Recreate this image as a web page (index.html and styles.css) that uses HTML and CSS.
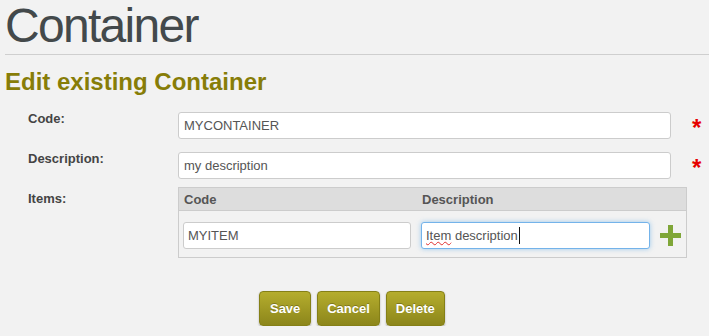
FILE: index.html
```html
<!DOCTYPE html>
<html lang="en">
<head>
  <meta charset="UTF-8">
  <meta name="viewport" content="width=device-width, initial-scale=1.0">
  <title>Container</title>

  <link rel="stylesheet" href="styles.css">

</head>
<body>
  <div class="page">
    <h1 class="title">Container</h1>
    <h2 class="subtitle">Edit existing Container</h2>

    <form class="edit-form">
      <div class="form-row row-code">
        <label class="form-label">Code:</label>
        <input type="text" class="field" value="MYCONTAINER">
        <span class="required">*</span>
      </div>

      <div class="form-row row-desc">
        <label class="form-label">Description:</label>
        <input type="text" class="field" value="my description">
        <span class="required">*</span>
      </div>

      <div class="form-row">
        <label class="form-label items-label">Items:</label>
        <div class="items">
          <div class="items-head">
            <div class="cell">Code</div>
            <div class="cell">Description</div>
            <div class="cell"></div>
          </div>
          <div class="items-row">
            <div class="cell"><input type="text" class="item-field" value="MYITEM"></div>
            <div class="cell">
              <div class="item-field focused"><span class="misspelled">Item</span> description<span class="caret"></span></div>
            </div>
            <div class="cell add-cell">
              <svg class="add-icon" width="21" height="21" viewBox="0 0 21 21">
                <rect x="8" y="0" width="5" height="21" fill="#7fa638"/>
                <rect x="0" y="8" width="21" height="5" fill="#7fa638"/>
              </svg>
            </div>
          </div>
        </div>
      </div>

      <div class="actions">
        <button type="button" class="btn">Save</button>
        <button type="button" class="btn">Cancel</button>
        <button type="button" class="btn">Delete</button>
      </div>
    </form>
  </div>
</body>
</html>
```

FILE: styles.css
```css
body {
  margin: 0;
  background: #f2f2f2;
  font-family: "Liberation Sans", Arial, sans-serif;
  font-size: 13px;
  color: #444;
}
.page {
  padding-left: 5px;
}
.title {
  margin: 0;
  font-size: 48px;
  font-weight: normal;
  line-height: 52px;
  letter-spacing: -1.7px;
  color: #43494b;
  padding-bottom: 2px;
  border-bottom: 1px solid #cfcfcf;
}
.subtitle {
  margin: 13px 0 0;
  font-size: 24px;
  line-height: 28px;
  color: #877d08;
}
.edit-form {
  margin-top: 16px;
  padding-left: 23px;
}
.form-row {
  display: flex;
  align-items: flex-start;
}
.row-code {
  margin-bottom: 13px;
}
.row-desc {
  margin-bottom: 8px;
}
.form-label {
  width: 150px;
  flex: none;
  font-weight: bold;
  line-height: 16px;
  margin-top: -1px;
}
.items-label {
  margin-top: 4px;
}
.field {
  box-sizing: border-box;
  width: 493px;
  height: 27px;
  border: 1px solid #cccccc;
  border-radius: 3px;
  background: white;
  padding: 0 5px;
  font-family: inherit;
  font-size: 13px;
  color: #555;
  outline: none;
}
.required {
  margin-left: 21px;
  padding-top: 5px;
  height: 22px;
  font-size: 24px;
  font-weight: bold;
  line-height: 22px;
  color: #e60000;
}
.items {
  box-sizing: border-box;
  width: 509px;
  border: 1px solid #cccccc;
}
.items-head, .items-row {
  display: grid;
  grid-template-columns: 238px 238px 1fr;
}
.items-head {
  background: #dddddd;
  border-bottom: 1px solid #cccccc;
  height: 22px;
  align-items: center;
  font-weight: bold;
  color: #555;
}
.items-head .cell {
  padding-left: 5px;
}
.items-row {
  padding: 11px 0 8px;
}
.items-row .cell {
  padding-left: 4px;
}
.item-field {
  box-sizing: border-box;
  width: 228px;
  height: 27px;
  border: 1px solid #cccccc;
  border-radius: 3px;
  background: white;
  padding: 0 4px;
  font-family: inherit;
  font-size: 13px;
  color: #555;
  outline: none;
}
.item-field.focused {
  width: 229px;
  display: flex;
  align-items: center;
  border-color: #74b3ea;
  box-shadow: 0 0 5px rgba(102, 175, 233, 0.6);
  white-space: pre;
}
.misspelled {
  text-decoration: underline wavy #e03030;
  text-decoration-thickness: 1px;
}
.caret {
  display: inline-block;
  width: 1px;
  height: 17px;
  background: #111;
  margin-left: 1px;
}
.add-cell {
  display: flex;
  align-items: center;
  height: 27px;
}
.add-icon {
  margin-left: 1px;
}
.actions {
  display: flex;
  justify-content: center;
  gap: 6px;
  margin: 33px 0 0 -28px;
  padding-right: 5px;
}
.btn {
  min-width: 52px;
  height: 35px;
  padding: 0 9px;
  border: 1px solid #858017;
  border-radius: 4px;
  background: linear-gradient(#b5ad2d, #8c861b);
  box-shadow: 0 1px 2px rgba(0, 0, 0, 0.3);
  color: white;
  font-family: inherit;
  font-size: 13px;
  font-weight: bold;
  text-shadow: 0 -1px 0 rgba(0, 0, 0, 0.25);
  cursor: pointer;
}
```
